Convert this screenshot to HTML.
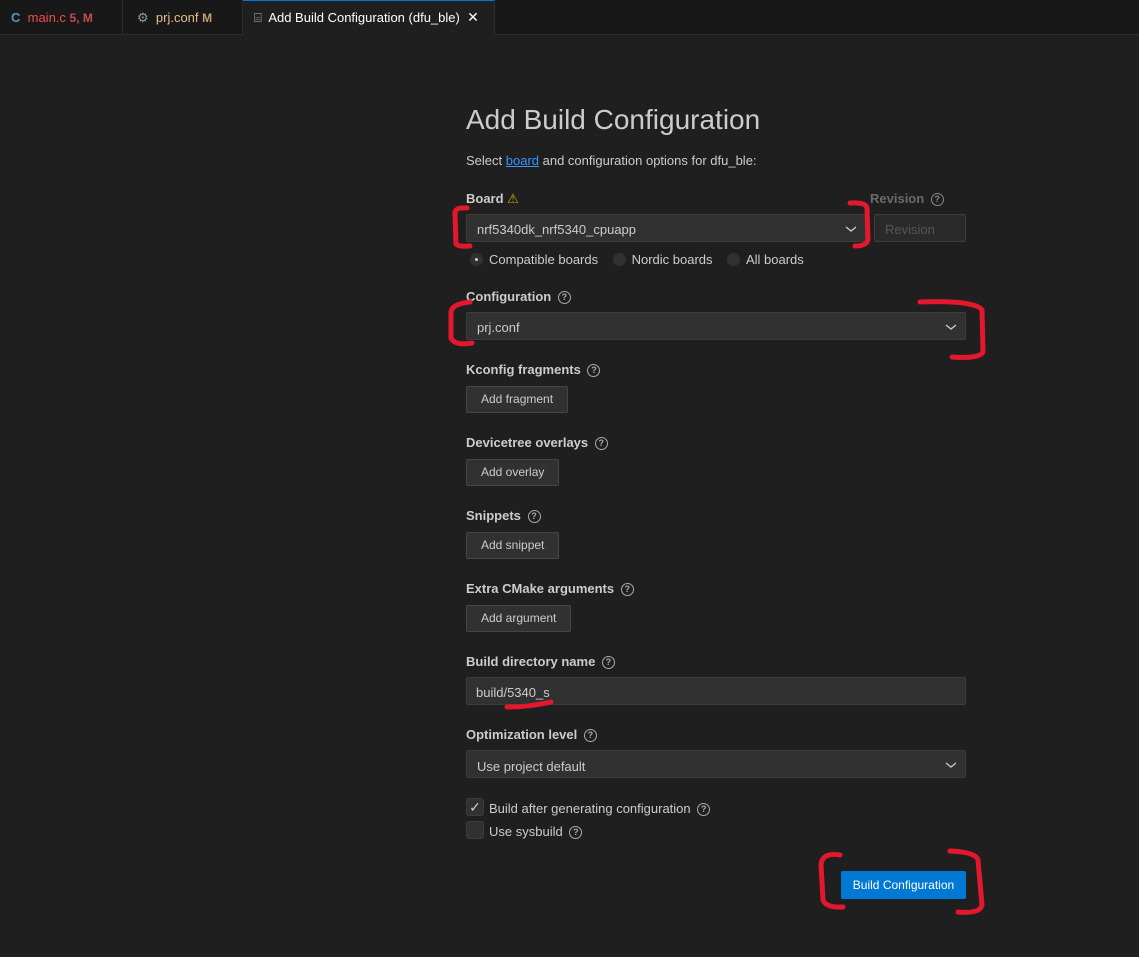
<!DOCTYPE html>
<html><head><meta charset="utf-8"><style>
*{box-sizing:border-box;margin:0;padding:0}
body{width:1139px;height:957px;background:#1f1f1f;font-family:"Liberation Sans",sans-serif;color:#ccc;position:relative;overflow:hidden;font-size:13px}
.tabs{position:absolute;left:0;top:0;width:1139px;height:35px;background:#181818;border-bottom:1px solid #2b2b2b}
.tab{position:absolute;top:0;height:35px;line-height:35px;font-size:13px;border-right:1px solid #2b2b2b}
.a{position:absolute;font-size:13px;color:#ccc}
.lbl{position:absolute;left:466px;font-weight:bold;font-size:13px;color:#ccc}
.q{display:inline-block;width:13px;height:13px;border:1.3px solid #aaa;border-radius:50%;font-size:9px;line-height:10px;text-align:center;color:#aaa;font-weight:bold;vertical-align:1px;margin-left:3px}
.box{position:absolute;background:#313131;border:1px solid #3c3c3c;border-radius:2px;padding-left:10px;line-height:28px;font-size:13px;color:#ccc}
.btn{position:absolute;left:466px;height:27px;background:#313131;border:1px solid #454545;border-radius:2px;line-height:25px;padding:0 14px;font-size:12px;color:#ccc}
.chev{position:absolute;right:8px;top:10px}
.radio{display:inline-block;width:13px;height:13px;border-radius:50%;background:#313131;vertical-align:-2px;margin-right:6px;position:relative}
.cb{position:absolute;left:466px;width:18px;height:18px;background:#313131;border:1px solid #3c3c3c;border-radius:3px}
</style></head><body>
<div class="tabs">
<div class="tab" style="left:0;width:123px;padding-left:11px"><span style="color:#519aba;font-weight:bold">C</span>&nbsp;&nbsp;<span style="color:#f14c4c">main.c</span> <span style="color:#c24e4e;font-size:12px;font-weight:bold">5, M</span></div>
<div class="tab" style="left:123px;width:120px;padding-left:14px"><span style="color:#8a9aa8">⚙</span>&nbsp; <span style="color:#e2c08d">prj.conf</span> <span style="color:#c0a070;font-weight:bold;font-size:12px">M</span></div>
<div class="tab" style="left:243px;width:252px;background:#1f1f1f;border-top:1px solid #0078d4;padding-left:11px;color:#fff;line-height:33px"><span style="color:#bbb">⌸</span>&nbsp; Add Build Configuration (dfu_ble) &nbsp;<span style="font-size:14px">✕</span></div>
</div>
<div class="a" style="left:466px;top:104px;font-size:28px;color:#ccc">Add Build Configuration</div>
<div class="a" style="left:466px;top:153px">Select <span style="color:#3794ff;text-decoration:underline">board</span> and configuration options for dfu_ble:</div>
<div class="lbl" style="top:191px">Board <span style="color:#cca700;font-weight:normal">⚠</span></div>
<div class="lbl" style="left:870px;top:191px;color:#6a6a6a">Revision <span class="q" style="border-color:#888;color:#888">?</span></div>
<div class="box" style="left:466px;top:214px;width:400px;height:28px;line-height:30px">nrf5340dk_nrf5340_cpuapp<svg class="chev" width="12" height="8"><path d="M1 2 L6 6 L11 2" stroke="#ccc" fill="none" stroke-width="1.3"/></svg></div>
<div class="box" style="left:874px;top:214px;width:92px;height:28px;background:#2a2a2a;color:#555;line-height:30px">Revision</div>
<div class="a" style="left:470px;top:252px"><span class="radio"><span style="position:absolute;left:5px;top:5px;width:3px;height:3px;background:#ccc;border-radius:50%"></span></span>Compatible boards &nbsp;&nbsp;&nbsp;<span class="radio"></span>Nordic boards &nbsp;&nbsp;&nbsp;<span class="radio"></span>All boards</div>
<div class="lbl" style="top:289px">Configuration <span class="q">?</span></div>
<div class="box" style="left:466px;top:312px;width:500px;height:28px;line-height:30px">prj.conf<svg class="chev" width="12" height="8"><path d="M1 2 L6 6 L11 2" stroke="#ccc" fill="none" stroke-width="1.3"/></svg></div>
<div class="lbl" style="top:362px">Kconfig fragments <span class="q">?</span></div>
<div class="btn" style="top:386px">Add fragment</div>
<div class="lbl" style="top:435px">Devicetree overlays <span class="q">?</span></div>
<div class="btn" style="top:459px">Add overlay</div>
<div class="lbl" style="top:508px">Snippets <span class="q">?</span></div>
<div class="btn" style="top:532px">Add snippet</div>
<div class="lbl" style="top:581px">Extra CMake arguments <span class="q">?</span></div>
<div class="btn" style="top:605px">Add argument</div>
<div class="lbl" style="top:654px">Build directory name <span class="q">?</span></div>
<div class="box" style="left:466px;top:677px;width:500px;height:28px;padding-left:9px;line-height:30px">build/5340_s</div>
<div class="lbl" style="top:727px">Optimization level <span class="q">?</span></div>
<div class="box" style="left:466px;top:750px;width:500px;height:28px;line-height:31px">Use project default<svg class="chev" width="12" height="8"><path d="M1 2 L6 6 L11 2" stroke="#ccc" fill="none" stroke-width="1.3"/></svg></div>
<div class="cb" style="top:798px;color:#ccc;font-size:14px;line-height:16px;text-align:center">✓</div>
<div class="a" style="left:489px;top:801px">Build after generating configuration <span class="q">?</span></div>
<div class="cb" style="top:821px"></div>
<div class="a" style="left:489px;top:824px">Use sysbuild <span class="q">?</span></div>
<div style="position:absolute;left:841px;top:871px;width:125px;height:28px;background:#0078d4;border-radius:2px;color:#fff;font-size:12px;line-height:29px;text-align:center">Build Configuration</div>
<svg width="1139" height="957" style="position:absolute;left:0;top:0" fill="none" stroke="#e3172d" stroke-width="5" stroke-linecap="round" stroke-linejoin="round">
<path d="M467 208 Q455 207 455 213 L456 244 Q458 247 470 246"/>
<path d="M850 203 Q866 202 867 208 L868 240 Q866 246 855 246"/>
<path d="M470 302 Q452 304 451 312 L451 338 Q455 346 472 343"/>
<path d="M920 302 Q975 300 982 310 L983 352 Q980 359 952 357"/>
<path d="M507 707 Q530 707 551 702"/>
<path d="M840 855 Q822 852 821 865 L823 900 Q826 908 843 907"/>
<path d="M950 851 Q976 852 978 860 L982 905 Q980 914 958 912"/>
</svg>
</body></html>
